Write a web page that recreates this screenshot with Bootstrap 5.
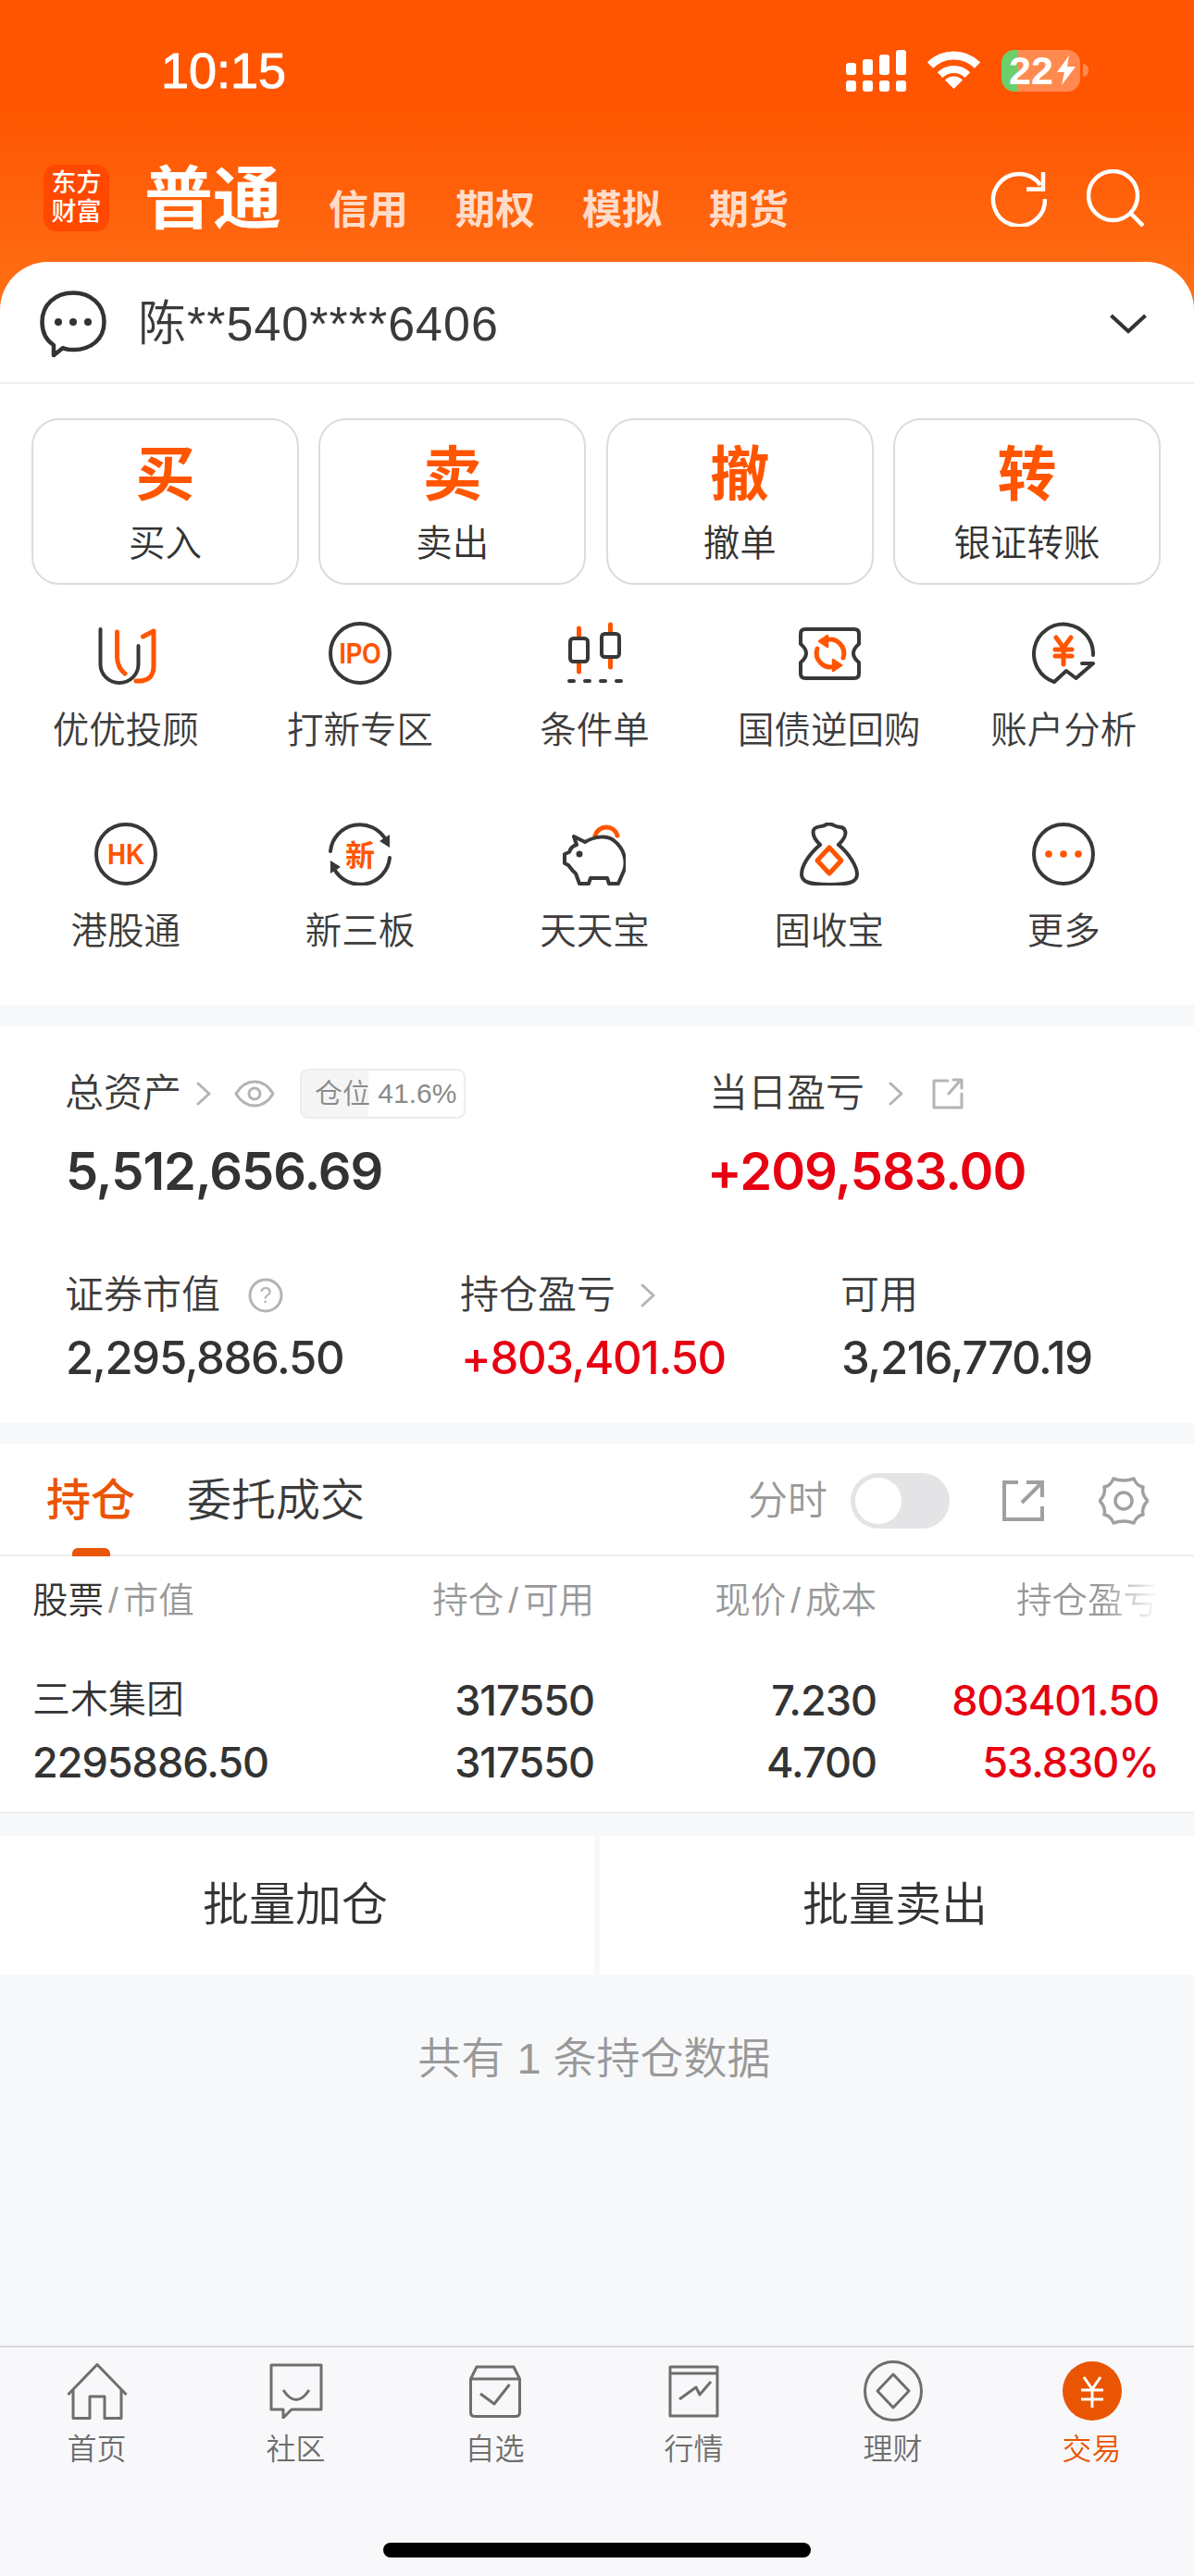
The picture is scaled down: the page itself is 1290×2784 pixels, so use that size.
<!DOCTYPE html>
<html lang="zh-CN">
<head>
<meta charset="UTF-8">
<title>交易</title>
<link href="https://cdn.jsdelivr.net/npm/bootstrap@5.3.3/dist/css/bootstrap.min.css" rel="stylesheet">
<style>
    html, body { margin: 0; }
    body { width: 1290px; height: 2784px; background: #f7f8fa; color: #333; font-family: "Liberation Sans", "Noto Sans CJK SC", sans-serif; font-weight: 350; overflow: hidden; }
    svg { display: block; flex: none; }
    .lh1 { line-height: 1; }
    .ink { fill: none; stroke: #383838; stroke-width: 4; stroke-linecap: round; stroke-linejoin: round; }
    .hot { fill: none; stroke: #ff5500; stroke-width: 5; stroke-linecap: round; stroke-linejoin: round; }
    .gry { fill: none; stroke: #b4b4b4; stroke-width: 3; stroke-linecap: round; stroke-linejoin: round; }
    .tabi { fill: none; stroke: #6e6e6e; stroke-width: 3; stroke-linejoin: round; }
    .digits { font-family: Inter, "Liberation Sans", sans-serif; }

    .hdr-wrap { background: linear-gradient(180deg, #ff5500 0, #ff5500 110px, #ff7018 340px, #ff7018 100%); }
    .stat-row { height: 152px; padding: 0 114px 0 174px; }
    .clock { font-size: 54px; line-height: 1; color: #fff; -webkit-text-stroke: 1px #fff; }
    .sig-wrap { gap: 7px; margin-right: 23px; }
    .sig-col { width: 11px; gap: 6px; }
    .sig-top { width: 11px; background: #fff; border-radius: 3px; }
    .sig-dot { width: 11px; height: 12px; background: #fff; border-radius: 3px; }
    .batt { width: 85px; height: 45px; border-radius: 14px; background: linear-gradient(90deg, #6bcf6b 18px, #ff8a50 18px); color: #fff; font-size: 43px; font-weight: 700; line-height: 45px; padding-left: 8px; margin-left: 23px; }
    .batt-cap { width: 6px; height: 14px; margin-left: 3px; background: #ff8a50; border-radius: 0 6px 6px 0; }
    .title-row { height: 131px; padding: 26px 54px 0 47px; }
    .logo-box { width: 71px; height: 72px; background: #ff4800; border-radius: 14px; color: #fff; font-size: 27px; font-weight: 500; line-height: 31px; text-align: center; padding-top: 5px; }
    .acct-main { font-size: 74px; font-weight: 700; color: #fff; line-height: 1; margin-left: 38px; margin-top: 1px; }
    .acct-sub { font-size: 43px; font-weight: 700; color: rgba(255,255,255,.78); line-height: 1; margin-top: 28px; margin-left: 51px; }
    .acct-box { height: 132px; background: #fff; border-radius: 52px 52px 0 0; padding: 3px 51px 0 43px; border-bottom: 2px solid #eceef0; }
    .acct-name { font-size: 52px; line-height: 1; color: #3a3a3a; margin-left: 34px; letter-spacing: 1px; }

    .panel { background: #fff; }
    .act-wrap { padding: 37px 36px 0 34px; }
    .act-btn { width: 289px; height: 180px; padding: 0; border: 2px solid #dcdcdc; border-radius: 30px; background: #fff; color: #333; font-weight: 350; }
    .act-big { font-size: 64px; font-weight: 700; color: #ff5500; line-height: 1; margin-top: 27px; }
    .act-small { font-size: 39.500px; line-height: 1; margin-top: 23px; }
    .ico-wrap { padding-bottom: 60px; }
    .ico-grid { padding: 40px 0 0 9px; width: 1277px; row-gap: 79px; }
    .ico-cell { width: 253.400px; }
    .ico-label { font-size: 39.500px; line-height: 1; margin-top: 30px; white-space: nowrap; color: #3c3c3c; }

    .gapper { height: 23px; }
    .asset-card { height: 429px; }
    .asset-a { padding: 46px 0 0 70px; }
    .asset-l { width: 693px; }
    .asset-lab { font-size: 42px; line-height: 54px; color: #3c3c3c; white-space: nowrap; }
    .val-big { font-size: 56px; letter-spacing: -1px; line-height: 1; margin-top: 29px; font-weight: 600; margin-left: 1px; }
    .val-mid { font-size: 49px; letter-spacing: -1.300px; line-height: 1; margin-top: 16px; font-weight: 500; margin-left: 1px; }
    .gain { color: #e60012; }
    .pos-tag { width: 179px; height: 54px; border: 2px solid #ececec; border-radius: 9px; background: linear-gradient(90deg, #f5f5f5 72px, #fff 72px); font-size: 30px; color: #8a8a8a; line-height: 50px; padding-left: 14px; white-space: nowrap; margin-left: 27px; }
    .eye-i { margin-left: 24px; }
    .asset-b { padding: 79px 0 0 70px; }

    .tab-row { height: 121px; padding: 3px 49px 0 50px; border-bottom: 2px solid #eeeff1; }
    .tab-on { font-size: 48px; line-height: 1; font-weight: 500; color: #ea5504; }
    .tab-off { font-size: 48px; line-height: 1; color: #3a3a3a; margin-left: 56px; }
    .tab-mark { left: 78px; bottom: -2px; width: 41px; height: 9px; background: #ea5504; border-radius: 6px 6px 0 0; }
    .tm-lab { font-size: 43px; line-height: 1; color: #999; }
    .switch-x { width: 107px; height: 60px; border-radius: 30px; background: #e4e4e6; padding: 5px; margin: 0 57px 0 25px; }
    .switch-k { width: 50px; height: 50px; border-radius: 50%; background: #fff; }

    .pos-head { height: 96px; padding: 0 38px 0 35px; font-size: 38.500px; color: #999; }
    .pos-head i { font-style: normal; padding: 0 5px; }
    .pos-line { padding: 0 38px 0 35px; height: 67px; font-size: 45px; letter-spacing: -1px; font-weight: 500; }
    .pos-c1 { flex: 1 1 0; white-space: nowrap; }
    .pos-c2 { width: 254px; text-align: right; white-space: nowrap; }
    .pos-c3 { width: 305px; text-align: right; white-space: nowrap; }
    .fade-x { background: linear-gradient(90deg, #999 60%, #fff 100%); -webkit-background-clip: text; background-clip: text; color: transparent; display: inline-block; }
    .dark-x { color: #333; }
    .stock-n { font-size: 41px; letter-spacing: 0; font-weight: 350; font-family: "Liberation Sans", "Noto Sans CJK SC", sans-serif; }
    .pos-end { border-bottom: 2px solid #eeeff1; padding-bottom: 20px; padding-top: 26px; }

    .batch-row { height: 150px; margin-top: 24px; gap: 6px; }
    .batch-b { flex: 1 1 0; background: #fff; border: 0; border-radius: 0; font-size: 50px; font-weight: 350; color: #333; padding: 0 4px 0 0; }
    .foot-note { font-size: 47px; color: #999; margin-top: 67px; line-height: 1; padding-right: 6px; }

    .tabbar { margin-top: auto; border-top: 2px solid #d8dadf; padding-top: 14px; background: #f8f8fa; }
    .tb-row { margin-left: -3px; }
    .tb-item { width: 215px; color: #6e6e6e; font-size: 32px; }
    .tb-icon { height: 66px; }
    .tb-lab { line-height: 1; margin-top: 14px; }
    .tb-on { color: #ea5504; }
    .home-bar { width: 462px; height: 16px; background: #000; border-radius: 8px; margin: 85px auto 20px; }
</style>
</head>
<body class="d-flex flex-column">

<div class="hdr-wrap">
    <div class="stat-row d-flex align-items-center justify-content-between">
        <div class="clock">10:15</div>
        <div class="d-flex align-items-center">
            <div class="sig-wrap d-flex align-items-end">
                <div class="sig-col d-flex flex-column"><div class="sig-top" style="height:13px"></div><div class="sig-dot"></div></div>
                <div class="sig-col d-flex flex-column"><div class="sig-top" style="height:17px"></div><div class="sig-dot"></div></div>
                <div class="sig-col d-flex flex-column"><div class="sig-top" style="height:22px"></div><div class="sig-dot"></div></div>
                <div class="sig-col d-flex flex-column"><div class="sig-top" style="height:27px"></div><div class="sig-dot"></div></div>
            </div>
            <svg width="57" height="44" viewBox="0 0 57 44" fill="#fff"><path d="M3 16.500A36 36 0 0 1 54 16.500" fill="none" stroke="#fff" stroke-width="9"/><path d="M13.650 27.150A21 21 0 0 1 43.350 27.150" fill="none" stroke="#fff" stroke-width="8"/><path d="M28.500 42L19 32.500A13.400 13.400 0 0 1 38 32.500Z"/></svg>
            <div class="batt d-flex align-items-center lh1">22<svg class="ms-1" width="20" height="32" viewBox="0 0 20 32" fill="#fff"><path d="M13 0L0 18H8L5 32L20 12H11Z"/></svg></div>
            <div class="batt-cap"></div>
        </div>
    </div>
    <div class="title-row d-flex align-items-start justify-content-between">
        <div class="d-flex align-items-start">
            <div class="logo-box">东方<br>财富</div>
            <div class="acct-main">普通</div>
            <div class="acct-sub">信用</div>
            <div class="acct-sub">期权</div>
            <div class="acct-sub">模拟</div>
            <div class="acct-sub">期货</div>
        </div>
        <div class="d-flex align-items-start" style="gap:43px;margin-top:5px">
            <svg width="62" height="62" viewBox="0 0 62 62" fill="none" stroke="#fff" stroke-width="4.500"><path d="M60 32A28 28 0 1 1 55 17"/><path d="M58 3V21.500H40"/></svg>
            <svg width="62" height="62" viewBox="0 0 62 62" fill="none" stroke="#fff" stroke-width="4.500"><circle cx="28.500" cy="28.500" r="26.500"/><path d="M47.500 47.500L61 61"/></svg>
        </div>
    </div>
    <div class="acct-box d-flex align-items-center">
        <svg width="72" height="72" viewBox="0 0 72 72" fill="none" stroke="#333" stroke-width="4.500" stroke-linejoin="round"><path d="M15 70L15 59C6 53 2.500 44 2.500 34C2.500 15 17 2.500 36 2.500S69.500 15 69.500 34S55 64 36 64C30 64 27 63 25 62Z"/><circle cx="20" cy="34" r="4" fill="#333" stroke="none"/><circle cx="36" cy="34" r="4" fill="#333" stroke="none"/><circle cx="52" cy="34" r="4" fill="#333" stroke="none"/></svg>
        <div class="acct-name">陈**540****6406</div>
        <svg class="ms-auto" width="40" height="22" viewBox="0 0 40 22" fill="none" stroke="#333" stroke-width="4"><path d="M1.500 2L20 19L38.500 2"/></svg>
    </div>
</div>

<div class="panel act-wrap">
    <div class="d-flex justify-content-between">
        <button class="btn act-btn d-flex flex-column align-items-center"><span class="act-big">买</span><span class="act-small">买入</span></button>
        <button class="btn act-btn d-flex flex-column align-items-center"><span class="act-big">卖</span><span class="act-small">卖出</span></button>
        <button class="btn act-btn d-flex flex-column align-items-center"><span class="act-big">撤</span><span class="act-small">撤单</span></button>
        <button class="btn act-btn d-flex flex-column align-items-center"><span class="act-big">转</span><span class="act-small">银证转账</span></button>
    </div>
</div>
<div class="panel ico-wrap">
    <div class="ico-grid d-flex flex-wrap">
        <div class="ico-cell d-flex flex-column align-items-center">
            <svg width="68" height="68" viewBox="0 0 68 68"><path class="ink" d="M6.500 8V46A20.500 20 0 0 0 47.500 46V26"/><path class="hot" d="M24.500 11V38Q25 50 33 56"/><path class="hot" d="M52.500 16L64 10V48Q64 65 45 64"/></svg>
            <div class="ico-label">优优投顾</div>
        </div>
        <div class="ico-cell d-flex flex-column align-items-center">
            <svg width="68" height="68" viewBox="0 0 68 68"><circle class="ink" cx="34" cy="34" r="32"/><text x="34" y="45" text-anchor="middle" font-family="Liberation Sans" font-weight="700" font-size="31" fill="#ff5500" textLength="45" lengthAdjust="spacingAndGlyphs">IPO</text></svg>
            <div class="ico-label">打新专区</div>
        </div>
        <div class="ico-cell d-flex flex-column align-items-center">
            <svg width="68" height="68" viewBox="0 0 68 68"><path class="hot" d="M17.500 7V54M51.500 3V49"/><rect x="8" y="18" width="19" height="25" rx="3.500" fill="#fff" stroke="#383838" stroke-width="4"/><rect x="42" y="13" width="19" height="25" rx="3.500" fill="#fff" stroke="#383838" stroke-width="4"/><path class="ink" d="M7 64H12M24 64H29M41 64H46M58 64H63" stroke-width="5"/></svg>
            <div class="ico-label">条件单</div>
        </div>
        <div class="ico-cell d-flex flex-column align-items-center">
            <svg width="68" height="68" viewBox="0 0 68 68"><path class="ink" d="M8 8H61Q66 8 66 13V24Q60 29 60 34Q60 39 66 44V56Q66 61 61 61H8Q3 61 3 56V44Q9 39 9 34Q9 29 3 24V13Q3 8 8 8Z"/><path class="hot" d="M30 20A15 15 0 0 1 49 39M40 48A15 15 0 0 1 21 29" stroke-width="5"/><path d="M23 21L32 15V27Z" fill="#ff5500" stroke="#ff5500" stroke-width="2.500" stroke-linejoin="round"/><path d="M47 47L38 41V53Z" fill="#ff5500" stroke="#ff5500" stroke-width="2.500" stroke-linejoin="round"/></svg>
            <div class="ico-label">国债逆回购</div>
        </div>
        <div class="ico-cell d-flex flex-column align-items-center">
            <svg width="68" height="68" viewBox="0 0 68 68"><path class="ink" d="M66 36A32 32 0 1 0 24 65L37 53L47.500 61L66 45H54"/><path class="hot" d="M26 17L34 28L42 17M25 30H43M25 37H43M34 28V46" stroke-width="4.500"/></svg>
            <div class="ico-label">账户分析</div>
        </div>
        <div class="ico-cell d-flex flex-column align-items-center">
            <svg width="68" height="68" viewBox="0 0 68 68"><circle class="ink" cx="34" cy="34" r="32"/><text x="34" y="45" text-anchor="middle" font-family="Liberation Sans" font-weight="700" font-size="31" fill="#ff5500" textLength="40" lengthAdjust="spacingAndGlyphs">HK</text></svg>
            <div class="ico-label">港股通</div>
        </div>
        <div class="ico-cell d-flex flex-column align-items-center">
            <svg width="68" height="68" viewBox="0 0 68 68"><path class="ink" d="M2 31A32 32 0 0 1 62 19M66 38A32 32 0 0 1 6 50"/><path d="M66 27L66 13L55 20Z" fill="#383838"/><path d="M2 41L2 55L13 48Z" fill="#383838"/><text x="34" y="47" text-anchor="middle" font-family="Noto Sans CJK SC" font-weight="700" font-size="32" fill="#ff5500">新</text></svg>
            <div class="ico-label">新三板</div>
        </div>
        <div class="ico-cell d-flex flex-column align-items-center">
            <svg width="68" height="68" viewBox="0 0 68 68"><path class="hot" d="M35 14A12.500 12.500 0 0 1 59 14" stroke-width="4.500"/><path class="ink" d="M12 15L24 21C34 15 48 13 56 20C66 28 70 42 66 52L60 66H50L48 60H30L28 66H18L14 55C10 52 8 48 6 46L2 44V34L7 32C8 28 12 25 15 24Z"/><circle cx="18" cy="34" r="3.500" fill="#383838"/></svg>
            <div class="ico-label">天天宝</div>
        </div>
        <div class="ico-cell d-flex flex-column align-items-center">
            <svg width="68" height="68" viewBox="0 0 68 68"><path class="ink" d="M24 24C10 36 4 48 4 56C4 64 12 67 34 67C56 67 64 64 64 56C64 48 56 34 44 24"/><path class="ink" d="M24 24C20 20 15 14 17 8C19 3 26 5 29 3C33 0 37 2 39 3C43 6 50 3 51 9C53 14 48 20 44 24"/><path class="hot" d="M34 27L47 41L34 55L21 41Z" stroke-width="4.500"/></svg>
            <div class="ico-label">固收宝</div>
        </div>
        <div class="ico-cell d-flex flex-column align-items-center">
            <svg width="68" height="68" viewBox="0 0 68 68"><circle class="ink" cx="34" cy="34" r="32"/><circle cx="18" cy="34" r="3.800" fill="#ff5500"/><circle cx="34" cy="34" r="3.800" fill="#ff5500"/><circle cx="50" cy="34" r="3.800" fill="#ff5500"/></svg>
            <div class="ico-label">更多</div>
        </div>
    </div>
</div>

<div class="gapper"></div>

<div class="panel asset-card">
    <div class="asset-a d-flex">
        <div class="asset-l">
            <div class="d-flex align-items-center">
                <div class="asset-lab">总资产</div>
                <svg class="ms-3" width="17" height="26" viewBox="0 0 17 26"><path class="gry" d="M2 2L14 13L2 24"/></svg>
                <svg class="eye-i" width="44" height="30" viewBox="0 0 44 30"><path class="gry" d="M2 15C8 5 15 2 22 2S36 5 42 15C36 25 29 28 22 28S8 25 2 15Z"/><circle class="gry" cx="22" cy="15" r="6"/></svg>
                <div class="pos-tag">仓位 41.6%</div>
            </div>
            <div class="val-big digits">5,512,656.69</div>
        </div>
        <div>
            <div class="d-flex align-items-center" style="margin-left:3px">
                <div class="asset-lab">当日盈亏</div>
                <svg style="margin-left:26px" width="17" height="26" viewBox="0 0 17 26"><path class="gry" d="M2 2L14 13L2 24"/></svg>
                <svg style="margin-left:29px" width="36" height="36" viewBox="0 0 36 36"><path class="gry" d="M18 4H3V33H33V18M19 18L32 3M24 3H33V12"/></svg>
            </div>
            <div class="val-big digits gain">+209,583.00</div>
        </div>
    </div>
    <div class="asset-b d-flex">
        <div style="width:427px">
            <div class="d-flex align-items-center">
                <div class="asset-lab">证券市值</div>
                <svg style="margin-left:30px" width="38" height="38" viewBox="0 0 38 38"><circle class="gry" cx="19" cy="19" r="17"/><text x="19" y="27" text-anchor="middle" font-family="Liberation Sans" font-size="23" fill="#b4b4b4">?</text></svg>
            </div>
            <div class="val-mid digits">2,295,886.50</div>
        </div>
        <div style="width:411px">
            <div class="d-flex align-items-center">
                <div class="asset-lab">持仓盈亏</div>
                <svg style="margin-left:27px" width="17" height="26" viewBox="0 0 17 26"><path class="gry" d="M2 2L14 13L2 24"/></svg>
            </div>
            <div class="val-mid digits gain">+803,401.50</div>
        </div>
        <div>
            <div class="asset-lab">可用</div>
            <div class="val-mid digits">3,216,770.19</div>
        </div>
    </div>
</div>

<div class="gapper"></div>

<div class="panel">
    <div class="tab-row position-relative d-flex align-items-center">
        <div class="tab-on">持仓</div>
        <div class="tab-off">委托成交</div>
        <div class="tab-mark position-absolute"></div>
        <div class="ms-auto d-flex align-items-center">
            <div class="tm-lab">分时</div>
            <div class="switch-x"><div class="switch-k"></div></div>
            <svg width="45" height="44" viewBox="0 0 45 44"><path d="M17 2H2V42H43V28M26 2H43V18M21 24L42 3" fill="none" stroke="#a0a0a0" stroke-width="4"/></svg>
            <svg style="margin-left:59px" width="54" height="54" viewBox="0 0 54 54"><path d="M16 3Q27 7 38 3Q41 11 48 12Q46 20 53 27Q46 34 48 42Q41 43 38 51Q27 47 16 51Q13 43 6 42Q8 34 1 27Q8 20 6 12Q13 11 16 3Z" fill="none" stroke="#a0a0a0" stroke-width="3.500" stroke-linejoin="round"/><circle cx="27" cy="27" r="9" fill="none" stroke="#a0a0a0" stroke-width="3.500"/></svg>
        </div>
    </div>
    <div class="pos-head d-flex align-items-center">
        <div class="pos-c1"><span class="dark-x">股票</span><i>/</i>市值</div>
        <div class="pos-c2">持仓<i>/</i>可用</div>
        <div class="pos-c3">现价<i>/</i>成本</div>
        <div class="pos-c3"><span class="fade-x">持仓盈亏</span></div>
    </div>
    <div class="pos-end">
        <div class="pos-line digits d-flex align-items-center">
            <div class="pos-c1 stock-n">三木集团</div>
            <div class="pos-c2">317550</div>
            <div class="pos-c3">7.230</div>
            <div class="pos-c3 gain">803401.50</div>
        </div>
        <div class="pos-line digits d-flex align-items-center">
            <div class="pos-c1">2295886.50</div>
            <div class="pos-c2">317550</div>
            <div class="pos-c3">4.700</div>
            <div class="pos-c3 gain">53.830%</div>
        </div>
    </div>
</div>

<div class="batch-row d-flex">
    <button class="btn batch-b">批量加仓</button>
    <button class="btn batch-b">批量卖出</button>
</div>
<div class="foot-note text-center">共有 1 条持仓数据</div>

<div class="tabbar">
    <div class="tb-row d-flex">
        <div class="tb-item d-flex flex-column align-items-center">
            <div class="tb-icon d-flex align-items-center"><svg width="66" height="61" viewBox="0 0 66 61"><path class="tabi" d="M1.500 34L33 1.500L64.500 34M7 28V59.500H25V36H41V59.500H59V28"/></svg></div>
            <div class="tb-lab">首页</div>
        </div>
        <div class="tb-item d-flex flex-column align-items-center">
            <div class="tb-icon d-flex align-items-center"><svg width="58" height="60" viewBox="0 0 58 60"><path class="tabi" d="M2 2H56V50H24L15 59V50H2Z"/><path class="tabi" d="M15 29Q29 50 43 29"/></svg></div>
            <div class="tb-lab">社区</div>
        </div>
        <div class="tb-item d-flex flex-column align-items-center">
            <div class="tb-icon d-flex align-items-center"><svg width="56" height="57" viewBox="0 0 56 57"><path class="tabi" d="M1.500 15L8 2H48L54.500 15V51Q54.500 55.500 50 55.500H6Q1.500 55.500 1.500 51ZM1.500 15H54.500"/><path class="tabi" d="M12 31L27 42L43.500 21"/></svg></div>
            <div class="tb-lab">自选</div>
        </div>
        <div class="tb-item d-flex flex-column align-items-center">
            <div class="tb-icon d-flex align-items-center"><svg width="55" height="57" viewBox="0 0 55 57"><path class="tabi" d="M2 2H53V55H2ZM2 9H53"/><path class="tabi" d="M12 37L30 24L34 32L46 18"/></svg></div>
            <div class="tb-lab">行情</div>
        </div>
        <div class="tb-item d-flex flex-column align-items-center">
            <div class="tb-icon d-flex align-items-center"><svg width="64" height="66" viewBox="0 0 64 66"><ellipse class="tabi" cx="32" cy="33" rx="30.500" ry="31.500"/><path class="tabi" d="M32 15L49 33L32 51L15 33Z"/></svg></div>
            <div class="tb-lab">理财</div>
        </div>
        <div class="tb-item d-flex flex-column align-items-center">
            <div class="tb-icon d-flex align-items-center"><svg width="64" height="64" viewBox="0 0 64 64"><circle cx="32" cy="32" r="32" fill="#ea5504"/><path d="M23 17L32 30L41 17M20 31H44M20 41H44M32 30V50" fill="none" stroke="#fff" stroke-width="3"/></svg></div>
            <div class="tb-lab tb-on">交易</div>
        </div>
    </div>
    <div class="home-bar"></div>
</div>

<script src="https://cdn.jsdelivr.net/npm/bootstrap@5.3.3/dist/js/bootstrap.bundle.min.js"></script>
</body>
</html>
